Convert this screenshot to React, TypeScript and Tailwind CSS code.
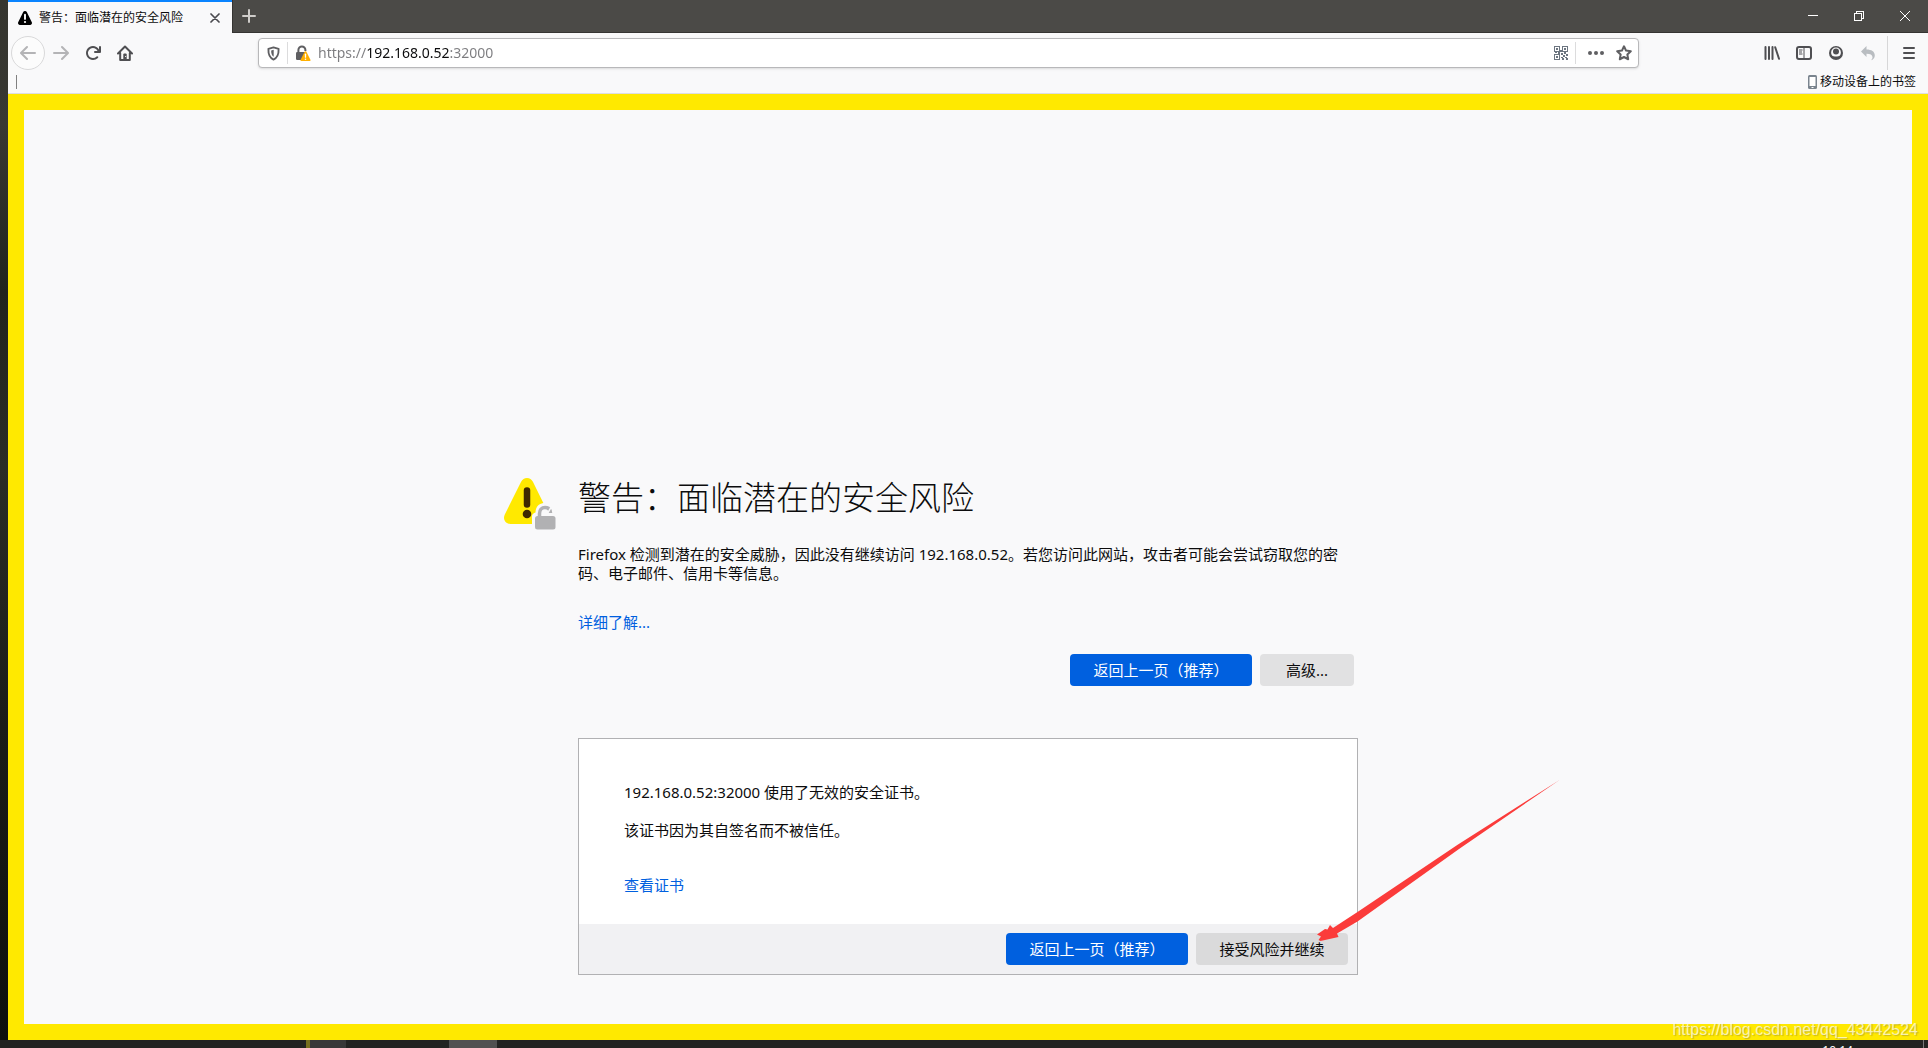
import React from "react";

type IconProps = { children: React.ReactNode; className?: string };

function Icon({ children, className = "size-4" }: IconProps) {
  return (
    <svg viewBox="0 0 16 16" className={className} fill="currentColor" aria-hidden="true">
      {children}
    </svg>
  );
}

const ARROW =
  "M15 7H3.414l4.293-4.293a1 1 0 0 0-1.414-1.414l-6 6a1 1 0 0 0 0 1.414l6 6a1 1 0 0 0 1.414-1.414L3.414 9H15a1 1 0 0 0 0-2z";

function ToolButton({ label, children, className = "" }: { label: string; children: React.ReactNode; className?: string }) {
  return (
    <button aria-label={label} className={`flex h-8 w-8 shrink-0 items-center justify-center ${className}`}>
      {children}
    </button>
  );
}

function TitleBar() {
  return (
    <header className="flex h-[33px] items-stretch bg-[#4b4a47]">
      <div className="flex w-56 items-center border-t-2 border-[#0a84ff] bg-[#f9f9fa] pl-[10px] pr-2">
        <svg viewBox="0 0 14 14" className="size-[14px] shrink-0" aria-hidden="true">
          <path d="M7 0a2 2 0 0 1 1.8 1.1l4.9 9.9a2 2 0 0 1-1.8 3H2.100a2 2 0 0 1-1.800-3l4.900-9.900A2 2 0 0 1 7 0z" fill="#000" />
          <path d="M7 3.700v4.200" stroke="#fff" strokeWidth="1.900" strokeLinecap="round" />
          <circle cx="7" cy="11" r="1.100" fill="#fff" />
        </svg>
        <span className="ml-[7px] flex-1 whitespace-nowrap text-xs text-[#0c0c0d]">警告：面临潜在的安全风险</span>
        <button aria-label="关闭标签页" className="flex size-[18px] items-center justify-center text-[#4a4a4f]">
          <svg viewBox="0 0 10 10" className="size-[10px]" stroke="currentColor" strokeWidth="1.700" strokeLinecap="round">
            <path d="M1 1l8 8M9 1l-8 8" />
          </svg>
        </button>
      </div>
      <div className="flex flex-1 items-stretch border-b border-l border-[#353432]">
        <button aria-label="新建标签页" className="flex w-8 items-center justify-center text-[#cfcdca]">
          <svg viewBox="0 0 14 14" className="size-[14px]" stroke="currentColor" strokeWidth="2" strokeLinecap="round">
            <path d="M7 1v12M1 7h12" />
          </svg>
        </button>
        <div className="flex-1" />
        <button aria-label="最小化" className="flex w-[46px] items-center justify-center text-white">
          <svg viewBox="0 0 10 10" className="size-[10px]" stroke="currentColor" shapeRendering="crispEdges">
            <path d="M0 4.500h10" />
          </svg>
        </button>
        <button aria-label="还原" className="flex w-[46px] items-center justify-center text-white">
          <svg viewBox="0 0 10 10" className="size-[10px]" stroke="currentColor" fill="none" shapeRendering="crispEdges">
            <path d="M.5 2.500h7v7h-7zM2.500 2.500v-2h7v7h-2" />
          </svg>
        </button>
        <button aria-label="关闭" className="flex w-[46px] items-center justify-center text-white">
          <svg viewBox="0 0 10 10" className="size-[10px]" stroke="currentColor">
            <path d="M0 0l10 10M10 0L0 10" />
          </svg>
        </button>
      </div>
    </header>
  );
}

function AddressBar() {
  return (
    <div className="mx-[117px] flex h-[30px] min-w-0 flex-1 items-center rounded-sm border border-[#b8b8ba] bg-white text-[#5f5f62] shadow-sm">
      <button aria-label="跟踪保护" className="flex w-7 items-center justify-center">
        <svg viewBox="0 0 14 16" className="h-[15px] w-[13px]" fill="none" stroke="currentColor" aria-hidden="true">
          <path d="M7 1.500l5.500 1.500c.2 5.500-.8 9.500-5.500 11.500C2.300 12.500 1.300 8.500 1.500 3z" strokeWidth="2" strokeLinejoin="round" />
          <path d="M7.200 4v7.600C5 10.200 4.500 7.500 4.500 4.700z" fill="currentColor" stroke="none" />
        </svg>
      </button>
      <span className="h-[22px] w-px bg-[#dcdcdd]" />
      <button aria-label="连接不安全" className="ml-[7px] flex w-4 items-center justify-center">
        <Icon>
          <path d="M3.400 8V5a3.500 3.500 0 0 1 7 0v1" fill="none" stroke="currentColor" strokeWidth="2" />
          <rect x="1" y="7" width="10" height="8" rx="1.200" />
          <path d="M10.500 6.200a1 1 0 0 1 .9.5l4 8a.9.9 0 0 1-.8 1.300H6.400a.9.9 0 0 1-.8-1.300l4-8a1 1 0 0 1 .9-.5z" fill="#ffb000" />
          <path d="M10.500 9.200v3" stroke="#fff" strokeWidth="1.300" strokeLinecap="round" />
          <circle cx="10.500" cy="14.200" r=".8" fill="#fff" />
        </Icon>
      </button>
      <input
        aria-label="地址"
        defaultValue="https://192.168.0.52:32000"
        className="ml-[7px] h-full min-w-0 flex-1 bg-[linear-gradient(90deg,#7c7c7f_49px,#0c0c0d_49px,#0c0c0d_131px,#7c7c7f_131px)] bg-clip-text pb-[2px] text-sm text-transparent caret-black outline-none"
      />
      <button aria-label="二维码" className="flex w-7 items-center justify-center text-[#6c7580]">
        <svg viewBox="0 0 14 14" className="size-[14px]" fill="currentColor" shapeRendering="crispEdges" aria-hidden="true">
          <path d="M0 0h6v6H0zM1 1v4h4V1zM8 0h6v6H8zM9 1v4h4V1zM0 8h6v6H0zM1 9v4h4V9z" fillRule="evenodd" />
          <path d="M2 2h2v2H2zM10 2h2v2h-2zM2 10h2v2H2zM1 6h2v1H1zM4 6h2v2H4zM6 4h2v2H6zM7 7h2v2H7zM10 6h2v2h-2zM9 9h2v2H9zM12 8h2v2h-2zM7 11h2v1H7zM11 11h2v1h-2zM8 12h2v2H8zM12 12h2v2h-2z" />
        </svg>
      </button>
      <span className="h-[22px] w-px bg-[#dcdcdd]" />
      <button aria-label="页面操作" className="ml-[6px] flex w-7 items-center justify-center">
        <Icon>
          <circle cx="2" cy="8" r="2" />
          <circle cx="8" cy="8" r="2" />
          <circle cx="14" cy="8" r="2" />
        </Icon>
      </button>
      <button aria-label="添加书签" className="flex w-7 items-center justify-center">
        <Icon>
          <path d="M8 1.300l2.050 4.300 4.750.65-3.450 3.300.85 4.700L8 12l-4.200 2.250.85-4.700L1.200 6.250l4.750-.65z" fill="none" stroke="currentColor" strokeWidth="2" strokeLinejoin="round" />
        </Icon>
      </button>
    </div>
  );
}

function NavBar() {
  return (
    <nav className="flex h-10 items-center px-[3px] text-[#4f4f52]">
      <button aria-label="后退" className="flex size-[34px] shrink-0 items-center justify-center rounded-full border border-[#d9d9da] bg-[#fcfcfc] text-[#b4b4b6]">
        <Icon>
          <path d={ARROW} />
        </Icon>
      </button>
      <ToolButton label="前进" className="text-[#b4b4b6]">
        <Icon className="size-4 rotate-180">
          <path d={ARROW} />
        </Icon>
      </ToolButton>
      <ToolButton label="刷新">
        <Icon>
          <path d="M15 1a1 1 0 0 0-1 1v2.418A6.995 6.995 0 1 0 8 15a6.954 6.954 0 0 0 4.950-2.050 1 1 0 0 0-1.414-1.414A5.019 5.019 0 1 1 12.549 6H10a1 1 0 0 0 0 2h5a1 1 0 0 0 1-1V2a1 1 0 0 0-1-1z" />
        </Icon>
      </ToolButton>
      <ToolButton label="主页">
        <Icon>
          <path d="M1 8.500l7-7 7 7M3.200 8v6.900h9.600V8" fill="none" stroke="currentColor" strokeWidth="2" strokeLinecap="round" strokeLinejoin="round" />
          <path d="M6.300 14V9.500a1 1 0 0 1 1-1h1.400a1 1 0 0 1 1 1V14z" />
          <circle cx="8.600" cy="11.500" r=".6" fill="#fff" />
        </Icon>
      </ToolButton>
      <AddressBar />
      <ToolButton label="我的足迹">
        <Icon>
          <path d="M1.500 2v12M5 2v12M8.500 2v12M11.200 2.300l3.800 11.500" fill="none" stroke="currentColor" strokeWidth="2" strokeLinecap="round" />
        </Icon>
      </ToolButton>
      <ToolButton label="侧栏">
        <Icon>
          <rect x="1" y="2" width="14" height="12" rx="2" fill="none" stroke="currentColor" strokeWidth="2" />
          <path d="M8 2v12M3 5h3.500M3 7h3M3 9h3.500" stroke="currentColor" fill="none" />
        </Icon>
      </ToolButton>
      <ToolButton label="账户">
        <Icon>
          <circle cx="8" cy="8" r="7" />
          <path d="M3.100 7.500a4.900 4.900 0 0 1 9.800 0c0 1.200-.4 2.200-1 3-1.100 1.300-6.700 1.300-7.800 0-.6-.8-1-1.800-1-3z" fill="#f9f9fa" />
          <circle cx="8" cy="6.500" r="3" />
        </Icon>
      </ToolButton>
      <ToolButton label="撤销" className="text-[#b9bdc1]">
        <Icon>
          <path d="M6.500 1v3.400c5 0 8.300 2 8.300 6 0 2.500-1.600 4.200-3.800 4.800 1-.9 1.500-1.800 1.500-3 0-2.300-2.200-3.400-6-3.400V12L1 6.500z" />
        </Icon>
      </ToolButton>
      <span className="ml-[3px] mr-[5px] h-[34px] w-px bg-[#d7d7d8]" />
      <ToolButton label="菜单">
        <Icon>
          <path d="M3 3h10M3 8h10M3 13h10" stroke="currentColor" strokeWidth="2" strokeLinecap="round" />
        </Icon>
      </ToolButton>
    </nav>
  );
}

function BookmarksBar() {
  return (
    <div className="flex h-[21px] items-start justify-between border-b border-[#dedee0] pl-2 pr-3">
      <span className="mt-[2px] h-[14px] w-px bg-[#808080]" />
      <button className="flex items-center gap-[3px] text-xs leading-[18px] text-[#0c0c0d]">
        <svg viewBox="0 0 9 14" className="h-[14px] w-[9px]" aria-hidden="true">
          <rect width="9" height="14" rx="1.500" fill="#7a848e" />
          <path d="M1.500 2h6v9h-6z" fill="#fff" />
          <rect x="3.500" y="12" width="2" height="1" fill="#fff" />
        </svg>
        移动设备上的书签
      </button>
    </div>
  );
}

function WarningIcon() {
  return (
    <svg viewBox="0 0 52 52" className="ml-px mt-px size-[52px]" aria-hidden="true">
      <path d="M23 0c2.600 0 4.700 1.400 5.900 3.700L45 36.500c2.300 4.600-.6 9.500-5.700 9.500H6.500C1.400 46-1.500 41.100.8 36.500L17.100 3.700C18.300 1.400 20.400 0 23 0z" fill="#ffe900" />
      <path d="M23 12.500v14" stroke="#3e2800" strokeWidth="6.500" strokeLinecap="round" />
      <circle cx="23" cy="36" r="4.300" fill="#3e2800" />
      <path d="M28 52V38c0-2 2-3 3.500-3.500 0-6 4-9.500 9.500-9.500 5 0 9 4 9 9l2 18z" fill="#f9f9fa" />
      <path d="M35.500 39v-3.500c0-3.500 2.200-6 5.500-6s5.300 1.900 5.500 5.500" fill="none" stroke="#b1b1b3" strokeWidth="3.500" />
      <path d="M44 34.500l3-5" stroke="#f9f9fa" strokeWidth="1.500" />
      <rect x="31" y="38" width="20.500" height="13.500" rx="2.500" fill="#b1b1b3" />
    </svg>
  );
}

function ActionButton({ children, tone }: { children: React.ReactNode; tone: "primary" | "plain" | "hover" }) {
  const tones = {
    primary: "bg-[#0060df] text-white min-w-[182px]",
    plain: "bg-[#e1e1e2] text-[#0c0c0d] min-w-[94px]",
    hover: "bg-[#dadadb] text-[#0c0c0d] min-w-[152px]",
  };
  return <button className={`h-8 whitespace-nowrap rounded-sm px-5 text-[15px] ${tones[tone]}`}>{children}</button>;
}

function PointerArrow() {
  return (
    <svg viewBox="0 0 244 164" className="pointer-events-none absolute bottom-[22px] left-[120px] h-[164px] w-[244px]" aria-hidden="true">
      <path d="M243.500 1L142 65.500 41.500 133 17 149l-3-3-2.500 4.500L9 150l-8 5.500 4 2-2.500 3.500 2 1 18-4-1.500-3.500 20.500-12L143 70z" fill="#fb3b3a" />
    </svg>
  );
}

function WarningPage() {
  return (
    <main className="flex flex-1 flex-col justify-end border-16 border-[#ffe900] bg-[#f9f9fa] pb-[49px] text-[15px] text-[#0c0c0d]">
      <div className="mx-auto grid w-full max-w-[930px] grid-cols-[75px_minmax(0,1fr)_75px]">
        <WarningIcon />
        <div>
          <section className="pr-1">
            <h1 className="text-[33px] font-light leading-[42px]">警告：面临潜在的安全风险</h1>
            <p className="mt-[26px] leading-[19px]">
              Firefox 检测到潜在的安全威胁，因此没有继续访问 192.168.0.52。若您访问此网站，攻击者可能会尝试窃取您的密码、电子邮件、信用卡等信息。
            </p>
            <p className="mt-[29px] leading-5">
              <a href="#more" className="text-[#0060df]">详细了解...</a>
            </p>
            <div className="mt-[22px] flex justify-end gap-2">
              <ActionButton tone="primary">返回上一页（推荐）</ActionButton>
              <ActionButton tone="plain">高级...</ActionButton>
            </div>
          </section>
          <section className="mt-[52px] border border-[#b1b1b3] bg-white">
            <div className="px-[45px] pb-[29px] pt-[43px] leading-5">
              <p>192.168.0.52:32000 使用了无效的安全证书。</p>
              <p className="mt-[18px]">该证书因为其自签名而不被信任。</p>
              <p className="mt-[35px]">
                <a href="#certificate" className="text-[#0060df]">查看证书</a>
              </p>
            </div>
            <div className="flex justify-end gap-2 bg-[#f1f1f3] px-[9px] py-[9px]">
              <ActionButton tone="primary">返回上一页（推荐）</ActionButton>
              <div className="relative">
                <ActionButton tone="hover">接受风险并继续</ActionButton>
                <PointerArrow />
              </div>
            </div>
          </section>
        </div>
      </div>
    </main>
  );
}

function Taskbar() {
  return (
    <footer className="flex h-2 items-stretch overflow-hidden bg-[#222321]">
      <span className="ml-[306px] w-1 bg-[#77701f]" />
      <span className="w-9 bg-[#383838]" />
      <span className="ml-[103px] w-12 bg-[#515151]" />
      <span className="ml-auto mr-[70px] mt-[5px] text-xs leading-3 text-white">10:14</span>
      <span className="mr-1 w-px bg-[#777777]" />
    </footer>
  );
}

export default function App() {
  return (
    <div className="relative flex min-h-screen flex-col bg-[#1d1e1b] font-['Noto_Sans','Noto_Sans_CJK_SC',sans-serif]">
      <div className="flex flex-1 flex-col bg-[linear-gradient(#35352f,#383833_12%,#22231d_28%,#2b2c26_45%,#1b1c18_70%,#0e0f0d)] pl-2">
        <div className="flex flex-1 flex-col bg-[#f9f9fa]">
          <TitleBar />
          <NavBar />
          <BookmarksBar />
          <WarningPage />
        </div>
      </div>
      <Taskbar />
      <span className="absolute bottom-2 right-[10px] font-['Liberation_Sans',sans-serif] text-base leading-5 text-white/70 [text-shadow:1px_1px_1px_rgba(120,110,60,0.4)]">
        https://blog.csdn.net/qq_43442524
      </span>
    </div>
  );
}
